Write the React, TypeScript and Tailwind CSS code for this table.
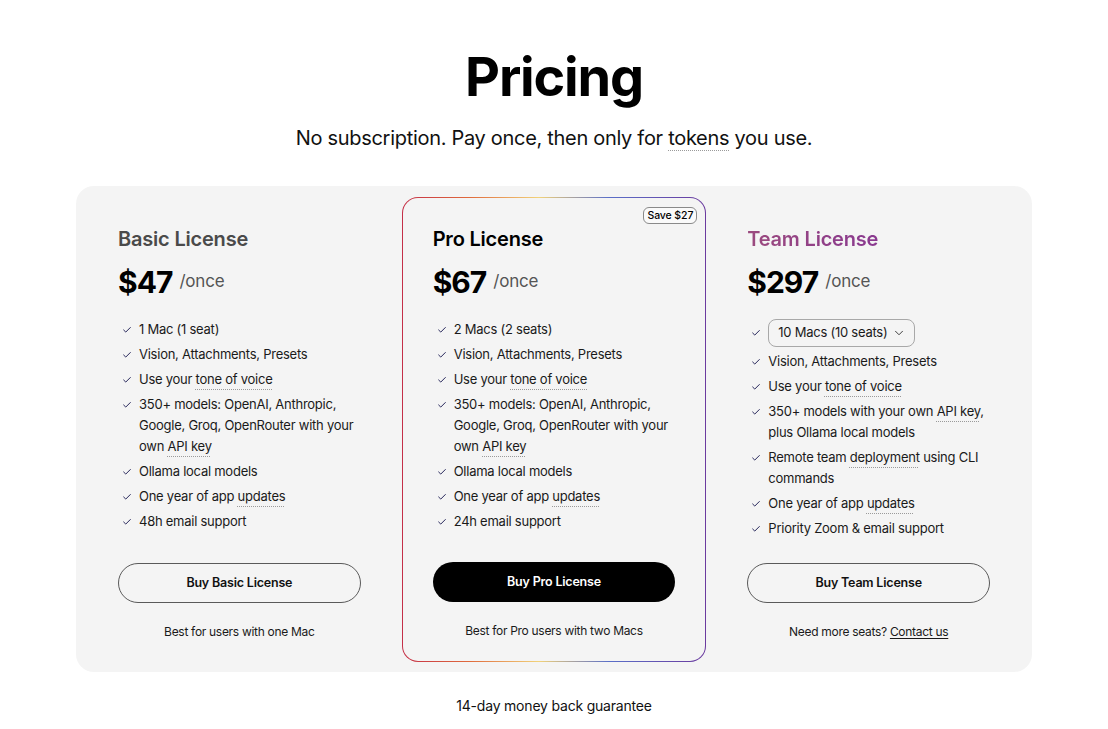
import { Check, ChevronDown } from "lucide-react";

function Dotted({ children }: { children: React.ReactNode }) {
  return (
    <span className="underline decoration-dotted decoration-[#9a9a9a] underline-offset-[5px] decoration-1">
      {children}
    </span>
  );
}

function FeatureList({ items, selectFirst }: { items: React.ReactNode[]; selectFirst?: boolean }) {
  return (
    <ul className="mt-[18px] flex flex-col gap-[4px] text-[13px] leading-[21px] tracking-[-0.25px] text-[#1a1a1a]">
      {items.map((item, i) => {
        const centered = selectFirst && i === 0;
        return (
          <li key={i} className={`flex gap-[7px] pl-[4px] ${centered ? "items-center" : "items-start"}`}>
            <Check
              className={`h-[10px] w-[10px] shrink-0 text-[#26265a] ${centered ? "" : "mt-[6px]"}`}
              strokeWidth={2.4}
            />
            <span>{item}</span>
          </li>
        );
      })}
    </ul>
  );
}

function PlanCard({
  title,
  titleClass,
  price,
  features,
  button,
  primary,
  note,
  bordered,
  selectFirst,
}: {
  title: string;
  titleClass: string;
  price: string;
  features: React.ReactNode[];
  button: string;
  primary?: boolean;
  note: React.ReactNode;
  bordered?: boolean;
  selectFirst?: boolean;
}) {
  return (
    <div
      className={`flex h-full flex-col pb-[22px] ${bordered ? "px-[30px] pt-[28px]" : "px-[31px] pt-[29px]"}`}
    >
      <h3 className={`text-[20px] font-semibold tracking-[-0.2px] leading-[26px] ${titleClass}`}>{title}</h3>
      <div className="mt-[12px] flex items-baseline gap-[7px]">
        <span className="text-[30px] font-bold leading-[36px] tracking-[-1px] text-black">{price}</span>
        <span className="relative -top-[6px] text-[17px] tracking-[-0.2px] text-[#555]">/once</span>
      </div>
      <FeatureList items={features} selectFirst={selectFirst} />
      <div className="mt-auto">
        <button
          className={`h-[40px] w-full rounded-full text-[12.5px] font-semibold tracking-[-0.2px] ${
            primary ? "bg-black text-white" : "border border-[#5a5a5a] bg-transparent text-[#111]"
          }`}
        >
          {button}
        </button>
        <p className="mt-[21px] text-center text-[12px] leading-[16px] tracking-[-0.3px] text-[#1a1a1a]">{note}</p>
      </div>
    </div>
  );
}

const shared = [
  "Vision, Attachments, Presets",
  <>
    Use your <Dotted>tone of voice</Dotted>
  </>,
];

export default function App() {
  return (
    <div
      className="min-h-screen bg-white pt-[44px] pb-[14px] text-black"
      style={{ fontFamily: "Inter, 'Noto Sans', sans-serif" }}
    >
      <h1 className="text-center text-[54px] font-bold leading-[66px] tracking-[-1.2px]">Pricing</h1>
      <p className="mt-[13px] text-center text-[20px] leading-[30px] tracking-[-0.3px] text-[#111]">
        No subscription. Pay once, then only for <Dotted>tokens</Dotted> you use.
      </p>

      <div className="mx-auto mt-[33px] grid w-[956px] grid-cols-3 gap-[10px] rounded-[18px] bg-[#f4f4f4] px-[11px] pt-[11px] pb-[10px]">
        <div className="h-[465px]">
          <PlanCard
            title="Basic License"
            titleClass="text-[#4a4a4a]"
            price="$47"
            features={[
              "1 Mac (1 seat)",
              ...shared,
              <>
                350+ models: OpenAI, Anthropic, Google, Groq, OpenRouter with your own <Dotted>API key</Dotted>
              </>,
              "Ollama local models",
              <>
                One year of app <Dotted>updates</Dotted>
              </>,
              "48h email support",
            ]}
            button="Buy Basic License"
            note="Best for users with one Mac"
          />
        </div>

        <div className="relative h-[465px] rounded-[16px] bg-[linear-gradient(90deg,#c42f48_0%,#e06a3c_22%,#f2d27a_45%,#5a6fc8_68%,#6b3a9e_100%)] p-px">
          <div className="h-full rounded-[15px] bg-[#f4f4f4]">
            <PlanCard
              bordered
              title="Pro License"
              titleClass="text-black"
              price="$67"
              features={[
                "2 Macs (2 seats)",
                ...shared,
                <>
                  350+ models: OpenAI, Anthropic, Google, Groq, OpenRouter with your own <Dotted>API key</Dotted>
                </>,
                "Ollama local models",
                <>
                  One year of app <Dotted>updates</Dotted>
                </>,
                "24h email support",
              ]}
              button="Buy Pro License"
              primary
              note="Best for Pro users with two Macs"
            />
          </div>
          <span className="absolute right-[9px] top-[10px] rounded-[6px] border border-[#8a8a8a] bg-[#fafafa] px-[3px] text-[10.5px] font-medium leading-[15px] tracking-[-0.1px] text-black">
            Save $27
          </span>
        </div>

        <div className="h-[465px]">
          <PlanCard
            selectFirst
            title="Team License"
            titleClass="bg-[linear-gradient(90deg,#9b4a7e,#7a2a9e)] bg-clip-text text-transparent"
            price="$297"
            features={[
              <span className="inline-flex h-[28px] items-center gap-[5px] rounded-[8px] border border-[#a8a8a8] pl-[9px] pr-[8px]">
                10 Macs (10 seats) <ChevronDown className="h-[14px] w-[14px] text-[#333]" strokeWidth={1.6} />
              </span>,
              ...shared,
              <>
                350+ models with your own <Dotted>API key</Dotted>, plus Ollama local models
              </>,
              <>
                Remote team <Dotted>deployment</Dotted> using CLI commands
              </>,
              <>
                One year of app <Dotted>updates</Dotted>
              </>,
              "Priority Zoom & email support",
            ]}
            button="Buy Team License"
            note={
              <>
                Need more seats? <a className="underline underline-offset-2">Contact us</a>
              </>
            }
          />
        </div>
      </div>

      <p className="mt-[24px] text-center text-[14px] leading-[20px] tracking-[-0.2px] text-[#111]">
        14-day money back guarantee
      </p>
    </div>
  );
}
